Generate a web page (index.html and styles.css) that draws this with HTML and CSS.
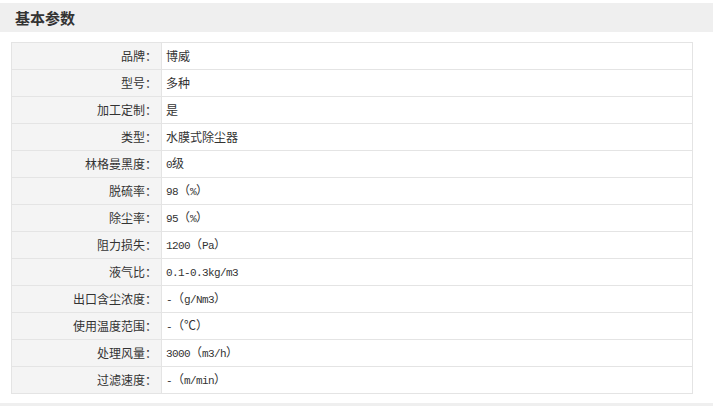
FILE: index.html
```html
<!DOCTYPE html>
<html lang="zh">
<head>
<meta charset="utf-8">
<link rel="stylesheet" href="styles.css">
</head>
<body>
<div class="section-head"><h2 class="section-title">基本参数</h2></div>
<table class="params">
  <tbody>
    <tr><th>品牌：</th><td>博威</td></tr>
    <tr><th>型号：</th><td>多种</td></tr>
    <tr><th>加工定制：</th><td>是</td></tr>
    <tr><th>类型：</th><td>水膜式除尘器</td></tr>
    <tr><th>林格曼黑度：</th><td><span class="lat">0</span>级</td></tr>
    <tr><th>脱硫率：</th><td><span class="lat">98</span>（<span class="lat">%</span>）</td></tr>
    <tr><th>除尘率：</th><td><span class="lat">95</span>（<span class="lat">%</span>）</td></tr>
    <tr><th>阻力损失：</th><td><span class="lat">1200</span>（<span class="lat">Pa</span>）</td></tr>
    <tr><th>液气比：</th><td><span class="lat">0.1-0.3kg/m3</span></td></tr>
    <tr><th>出口含尘浓度：</th><td><span class="lat">-</span>（<span class="lat">g/Nm3</span>）</td></tr>
    <tr><th>使用温度范围：</th><td><span class="lat">-</span>（℃）</td></tr>
    <tr><th>处理风量：</th><td><span class="lat">3000</span>（<span class="lat">m3/h</span>）</td></tr>
    <tr><th>过滤速度：</th><td><span class="lat">-</span>（<span class="lat">m/min</span>）</td></tr>
  </tbody>
</table>
<div class="section-foot"></div>
</body>
</html>
```
FILE: styles.css
```css
html, body {
  margin: 0;
  padding: 0;
  background: #ffffff;
  font-family: "Noto Sans CJK SC", "Noto Sans", sans-serif;
  color: #333333;
}
.section-head {
  margin-top: 3px;
  height: 29px;
  background: #efefef;
  display: flex;
  align-items: center;
  padding-left: 15px;
}
.section-title {
  margin: 0;
  font-size: 15px;
  font-weight: bold;
  color: #333333;
  line-height: 1;
}
.params {
  margin: 10px 0 0 11px;
  width: 682px;
  border-collapse: collapse;
  font-size: 12px;
  line-height: 16px;
}
.params th,
.params td {
  border: 1px solid #e4e4e4;
  height: 27px;
  padding: 0;
  box-sizing: border-box;
}
.params th {
  width: 150px;
  background: #f4f4f4;
  font-weight: normal;
  text-align: right;
  padding-right: 4px;
  color: #333333;
}
.params td {
  text-align: left;
  padding-left: 4px;
  color: #333333;
}
.lat {
  font-family: "Liberation Mono", monospace;
  font-size: 11px;
  letter-spacing: -0.6px;
}
.section-foot {
  margin-top: 9px;
  height: 4px;
  background: #efefef;
}
```
